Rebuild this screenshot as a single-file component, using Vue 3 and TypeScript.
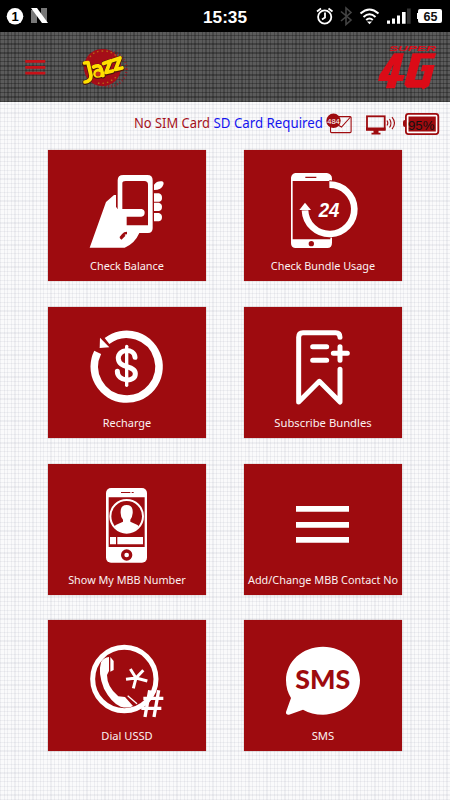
<script setup lang="ts">
interface Tile {
  id: string
  label: string
  width: number
}

const tiles: Tile[] = [
  { id: 'balance', label: 'Check Balance', width: 222 },
  { id: 'usage', label: 'Check Bundle Usage', width: 313 },
  { id: 'recharge', label: 'Recharge', width: 145 },
  { id: 'subscribe', label: 'Subscribe Bundles', width: 292 },
  { id: 'number', label: 'Show My MBB Number', width: 353 },
  { id: 'contact', label: 'Add/Change MBB Contact No', width: 450 },
  { id: 'ussd', label: 'Dial USSD', width: 154 },
  { id: 'sms', label: 'SMS', width: 68 },
]
</script>

<template>
  <main class="screen">
    <header class="status">
      <svg viewBox="0 0 450 32" width="450" height="32">
        <circle cx="15" cy="16.3" r="8.3" fill="#fff" />
        <text x="15" y="21" text-anchor="middle" font-size="13" font-weight="700" fill="#000">1</text>
        <path d="M31 10h6v13h-6zM41 8h6v13h-6z" fill="#777" />
        <path d="M31 8h6l11 15h-6z" fill="#fff" />
        <text x="203" y="22.8" textLength="44" lengthAdjust="spacingAndGlyphs" font-size="17" font-weight="700" fill="#fff">15:35</text>
        <g fill="none" stroke="#fff" stroke-width="1.8">
          <circle cx="324.7" cy="17" r="6.6" />
          <path d="M325 12.5v5l-3 2M317 11.5l4-3M332.5 11.5l-4-3" />
        </g>
        <path d="M341 11.5l10 8.5-5 4.5V8l5 4.5-10 8.5" fill="none" stroke="#444" stroke-width="1.6" />
        <path d="M360.5 13.5q9-8 18 0M363.5 17q6-5.5 12 0M366.2 20q3.3-3 6.6 0" fill="none" stroke="#fff" stroke-width="2" />
        <path d="M367 21.5h5l-2.5 2.7z" fill="#fff" />
        <path d="M387 20.5h3v3.3h-3zM392 18.5h3v5.3h-3zM397 15.5h3v8.3h-3zM402 12h3.600v11.800H402z" fill="#fff" />
        <path d="M407 8.5h3.7v15.3H407z" fill="#333" />
        <path d="M420 9h20a2 2 0 012 2v10a2 2 0 01-2 2h-20a2 2 0 01-2-2v-2h-1v-6h1v-2a2 2 0 012-2z" fill="#fff" />
        <text x="430.5" y="20.7" text-anchor="middle" textLength="14" font-size="12.5" font-weight="700" fill="#111">65</text>
      </svg>
    </header>

    <nav class="brand">
      <svg viewBox="0 32 450 70" width="450" height="70">
        <path d="M25.300 60h20v2.800h-20zM25.300 66h20v2.800h-20zM25.300 71.800h20v2.800h-20z" fill="#c81118" />
        <circle cx="102.500" cy="67.500" r="18.600" fill="#a50e18" />
        <circle cx="109" cy="69" r="17.500" fill="none" stroke="#a50e18" stroke-opacity=".7" stroke-width="2.400" stroke-dasharray="1 2" />
        <path d="M90 57q4-6 13-6 9 0 14 6M98 83q9 2 18-6" fill="none" stroke="#b76914" stroke-width="1.300" stroke-dasharray="1.500 3" />
        <g fill="none" stroke-linejoin="round" stroke-linecap="round">
          <path class="jazz-shadow" d="M84.500 64l3.500-.5 3 12q0 6-6 7M93.500 67.500q6-3 7.500 1.500l2 7M101 71q-6-.5-6 3.500 1 3.500 7 .5M104 63.500l6.500-2-4.500 11.500 6.500-1.500M113.500 60.500l6.500-2-4.500 11.500 6.500-1.500" />
          <path class="jazz" d="M84.500 63l3.500-.5 3 13q0 6-6 6.500M93.500 67q6-3 7.500 1.500l2 7M101 70.500q-6-.5-6 3.500 1 3.500 7 .5M103.500 63.500l7-2.500-4.500 11.500 6.500-1.500M112.500 60.500l7.500-2.500-4.500 11.500 6.500-1.500" />
        </g>
        <circle cx="98" cy="74" r="2.500" fill="#c5341a" />
        <text class="super" x="389" y="51" textLength="47" lengthAdjust="spacingAndGlyphs">SUPER</text>
        <path d="M394 53.300h10L398.500 75h6.300l-2 6h-5.900l-2 7.300h-9l2-7.300h-9.800l1.300-6zM393.700 64l-5.500 11h2.600z" fill="#dc0b17" fill-rule="evenodd" />
        <path d="M412.500 53.300h23.700l-1.700 5.300h-13.700l-6 21.200h7.400l2.500-8.600h-4l1.800-6.300h12.300L429 86l-6 3.500-1.500-1.700H407l-2.700-3.300z" fill="#dc0b17" />
      </svg>
    </nav>

    <section class="info">
      <svg viewBox="0 102 450 48" width="450" height="48">
        <g class="notice">
          <text x="134" y="128" textLength="76" lengthAdjust="spacingAndGlyphs" fill="#a5101a">No SIM Card</text>
          <text x="213.500" y="128" textLength="109.500" lengthAdjust="spacingAndGlyphs" fill="#1515ef">SD Card Required</text>
        </g>
        <g fill="none" stroke="#9e0b0f" stroke-width="1.100">
          <rect x="330.500" y="116.600" width="20.600" height="16" rx="1" />
          <path d="M350.500 117l-9 10-7-4" />
        </g>
        <circle cx="333.500" cy="120.800" r="7.200" fill="#9e0b0f" />
        <text x="333.500" y="123.700" text-anchor="middle" textLength="12.500" font-size="7.500" fill="#fff">484</text>
        <rect x="367" y="116.300" width="17.700" height="13.400" fill="none" stroke="#9e0b0f" stroke-width="1.800" />
        <path d="M366 127.500h19.500v3H366zM373.500 130h5v2.700h2v1.900h-9v-1.900h2z" fill="#9e0b0f" />
        <path d="M387 120.500q1.700 2.500 0 5M389.500 119q3 4.500 0 8.500M392 117.200q5 6 0 12" fill="none" stroke="#9e0b0f" stroke-width="1.100" />
        <path d="M405 120q-2 0-2 2v3q0 2 2 2z" fill="#9e0b0f" />
        <rect x="405.900" y="113.900" width="32.400" height="20.200" rx="2.500" fill="#fff" stroke="#9e0b0f" stroke-width="1.800" />
        <rect x="408.500" y="116.500" width="27.300" height="15" fill="#9e0b0f" />
        <text x="408" y="130.300" textLength="26.500" lengthAdjust="spacingAndGlyphs" font-size="13" fill="#111">95%</text>
      </svg>
    </section>

    <section class="grid">
      <button v-for="tile in tiles" :key="tile.id" class="tile" type="button">
        <svg viewBox="24 21 474 393" preserveAspectRatio="none">
          <g v-if="tile.id === 'balance'" transform="translate(0 6)" fill="#fff">
            <path fill-rule="evenodd" d="M250 90h72q16 0 16 16v144q0 14-14 14h-26q-14 32-44 44H149l49-137 24-21h6v35l5 8V106q0-16 17-16zM247 115v77h58q9 2 9 11 0 10-10 12h-44v26h64V119q0-11-11-11h-56q-10 0-10 7z" />
            <path d="M241 279l8-10q4-5 12-5M242 282l12-12" fill="none" stroke="#9e0b0f" stroke-width="7" />
            <path d="M342 119q9-12 24-10 7 3 4 10-5 16-28 16zM342 145h15q10 3 9 15 0 9-8 10h-16zM342 173h15q9 3 9 12 0 11-9 13h-15zM342 204h15q9 3 9 12 0 11-9 13h-15z" />
          </g>

          <g v-else-if="tile.id === 'usage'" transform="translate(0 6)">
            <path fill="#fff" fill-rule="evenodd" d="M178 84h95q15 3 15 17v25h-5v-18H170v175h113v-10h5v20q0 16-14 16h-97q-12-2-12-14V98q2-12 13-14zM208 95v4h33v-4z" />
            <path d="M280 119a73 73 0 11-72 73" fill="none" stroke="#9e0b0f" stroke-width="26" />
            <path d="M280 119a74 74 0 11-73 77" fill="none" stroke="#fff" stroke-width="20" />
            <path d="M190 195l17-22 18 22z" fill="#fff" />
            <circle cx="226" cy="296" r="8" fill="#9e0b0f" />
            <text class="hours" x="248" y="217" textLength="62" lengthAdjust="spacingAndGlyphs">24</text>
          </g>

          <g v-else-if="tile.id === 'recharge'">
            <path d="M173 157A97 97 0 10201 123" fill="none" stroke="#fff" stroke-width="23" />
            <path d="M180 113l28 29-29 2z" fill="#fff" />
            <path d="M285 172c-2-28-52-27-50 4 2 31 51 19 51 45 0 28-54 24-54-7" fill="none" stroke="#fff" stroke-width="15" stroke-linecap="round" />
            <path d="M260 139v117" fill="none" stroke="#fff" stroke-width="10" stroke-linecap="round" />
          </g>

          <g v-else-if="tile.id === 'subscribe'" fill="none" stroke="#fff" stroke-width="15" stroke-linecap="round" stroke-linejoin="round">
            <path d="M312 112q0-14-13-14h-98q-13 0-13 14v194l62-62 62 62v-98M230 140h42M230 181h42M292 160h42M312 140v41" />
          </g>

          <g v-else-if="tile.id === 'number'">
            <rect x="198" y="93" width="123" height="224" rx="15" fill="#fff" />
            <path d="M243 105h28v3h-28zM275 105h6v3h-6zM206 121h108v149H206z" fill="#9e0b0f" />
            <circle cx="260" cy="178" r="49" fill="none" stroke="#fff" stroke-width="6" />
            <path fill="#fff" d="M260 144q20 0 18 25-1 12-7 19v6l20 9q7 3 3 8-13 16-34 16t-34-16q-4-5 3-8l20-9v-6q-7-7-7-19-2-25 18-25zM210 240h18v22h-18zM232 240h77v22h-77z" />
            <circle cx="260" cy="294" r="12" fill="#fff" stroke="#9e0b0f" stroke-width="10" />
          </g>

          <path v-else-if="tile.id === 'contact'" fill="#fff" d="M180 147h159v17H180zM180 195h159v17H180zM180 240h159v17H180z" />

          <g v-else-if="tile.id === 'ussd'">
            <circle cx="253" cy="198" r="95" fill="none" stroke="#fff" stroke-width="15" />
            <path fill="#fff" d="M183 148q8-15 24-16v42l-6 12q0 36 34 64l20 2 24 27q-14 8-37 2-28-12-50-54-19-45-9-79zM211 132l10 12v27l-10 5z" />
            <path d="M263 248l28 24" stroke="#fff" stroke-width="4" />
            <path d="M288 195l-17-27M288 195l22-23M288 195l34 9M288 195l-8 31M288 195l-30 4" fill="none" stroke="#fff" stroke-width="9" />
            <path d="M329 232l-14 80M356 232l-14 80M310 256h60M304 286h60" fill="none" stroke="#fff" stroke-width="10" />
          </g>

          <g v-else>
            <path fill="#fff" d="M261 101c62 0 111 45 111 101s-49 103-111 103q-34 0-60-15l-42 15q-10 1-9-8l15-42q-15-24-15-53c0-56 49-101 111-101z" />
            <text class="message" x="178" y="229" textLength="165" lengthAdjust="spacingAndGlyphs">SMS</text>
          </g>

          <text class="label" x="261" y="381" text-anchor="middle" :textLength="tile.width" lengthAdjust="spacingAndGlyphs">{{ tile.label }}</text>
        </svg>
      </button>
    </section>
  </main>
</template>

<style>
body {
  margin: 0;
}
</style>

<style scoped>
.screen {
  width: 450px;
  height: 800px;
  overflow: hidden;
  font-family: "Liberation Sans", Arial, sans-serif;
  background:
    repeating-linear-gradient(90deg, rgba(115, 120, 145, 0.09) 0 1.2px, transparent 1.2px 3.6px),
    repeating-linear-gradient(0deg, rgba(115, 120, 145, 0.09) 0 1.2px, transparent 1.2px 4.4px),
    #fafafb;
}

svg {
  display: block;
}

.status {
  height: 32px;
  background: #000;
}

.brand {
  height: 70px;
  background:
    repeating-linear-gradient(90deg, rgba(0, 0, 0, 0.22) 0 1.4px, transparent 1.4px 3.6px),
    repeating-linear-gradient(0deg, rgba(0, 0, 0, 0.28) 0 1.4px, transparent 1.4px 4.4px),
    #5b5b5b;
}

.info {
  height: 48px;
}

.notice {
  font-family: "Noto Sans", "Open Sans", sans-serif;
  font-size: 13.5px;
}

.jazz-shadow {
  stroke: #4b160c;
  stroke-width: 5;
}

.jazz {
  stroke: #ffe000;
  stroke-width: 3.7;
}

.super {
  font-size: 8px;
  font-style: italic;
  font-weight: 700;
  fill: #dc0b17;
}

.grid {
  display: grid;
  grid-template-columns: 158px 158px;
  grid-auto-rows: 131px;
  gap: 25.8px 38px;
  padding-left: 48px;
}

.tile {
  padding: 0;
  border: 0;
  background: #9e0b0f;
  box-shadow: 0 0 1px #a78688;
}

.tile svg {
  width: 158px;
  height: 131px;
  overflow: visible;
}

.label {
  font-family: "Noto Sans", "Open Sans", sans-serif;
  font-size: 34px;
  fill: #fbf2f2;
}

.hours {
  font-size: 60px;
  font-style: italic;
  font-weight: 700;
  fill: #fff;
}

.message {
  font-family: Lato, sans-serif;
  font-size: 79px;
  font-weight: 900;
  fill: #9e0b0f;
}
</style>
